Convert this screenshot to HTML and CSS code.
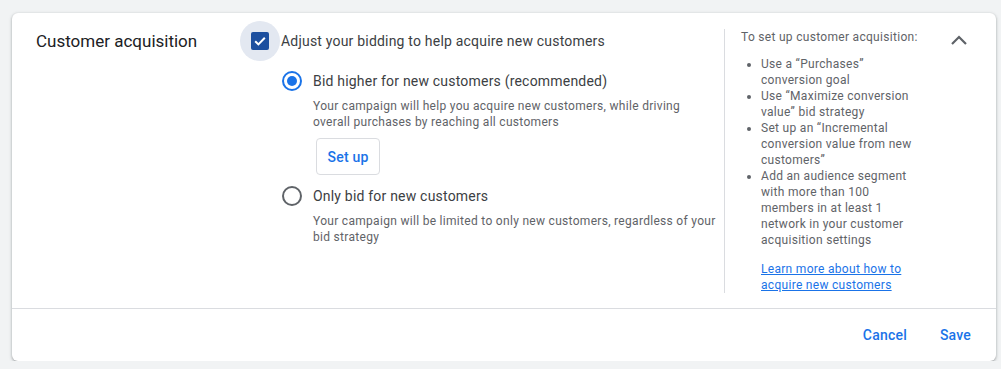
FILE: index.html
```html
<!DOCTYPE html>
<html lang="en">
<head>
<meta charset="utf-8">
<title>Customer acquisition</title>
<link rel="stylesheet" href="styles.css">
</head>
<body>
<div class="card">
  <div class="content">
    <div class="title">Customer acquisition</div>
    <div class="main">
      <label class="check-row">
        <span class="checkbox">
          <svg viewBox="0 0 18 18" width="18" height="18"><path d="M4.2 9.2l3.2 3.2 6.4-6.6" fill="none" stroke="#fff" stroke-width="2"/></svg>
        </span>
        <span class="check-label">Adjust your bidding to help acquire new customers</span>
      </label>
      <div class="options">
        <div class="option">
          <div class="radio-row">
            <span class="radio checked"></span>
            <span class="radio-label">Bid higher for new customers (recommended)</span>
          </div>
          <p class="desc">Your campaign will help you acquire new customers, while driving overall purchases by reaching all customers</p>
          <button class="setup">Set up</button>
        </div>
        <div class="option second">
          <div class="radio-row">
            <span class="radio"></span>
            <span class="radio-label">Only bid for new customers</span>
          </div>
          <p class="desc">Your campaign will be limited to only new customers, regardless of your bid strategy</p>
        </div>
      </div>
    </div>
    <aside class="aside">
      <div class="aside-head">To set up customer acquisition:</div>
      <ul class="steps">
        <li>Use a “Purchases” conversion goal</li>
        <li>Use “Maximize conversion value” bid strategy</li>
        <li>Set up an “Incremental conversion value from new customers”</li>
        <li>Add an audience segment with more than 100 members in at least 1 network in your customer acquisition settings</li>
      </ul>
      <a class="learn" href="#">Learn more about how to acquire new customers</a>
    </aside>
    <div class="collapse">
      <svg viewBox="0 0 24 24" width="24" height="24"><path d="M5 16l7-7 7 7" fill="none" stroke="#5f6368" stroke-width="2.2"/></svg>
    </div>
  </div>
  <div class="footer">
    <button class="text-btn">Cancel</button>
    <button class="text-btn">Save</button>
  </div>
</div>
</body>
</html>
```
FILE: styles.css
```css
* { box-sizing: border-box; }
body {
  margin: 0;
  background: #f1f3f4;
  font-family: Roboto, "Liberation Sans", Arial, sans-serif;
  color: #3c4043;
}
.card {
  margin: 13px 5px 0 12px;
  width: 984px;
  height: 348px;
  background: #fff;
  border-radius: 6px;
  box-shadow: 0 1px 2px rgba(60,64,67,.3), 0 1px 3px 1px rgba(60,64,67,.15);
  display: flex;
  flex-direction: column;
}
.content {
  display: grid;
  grid-template-columns: 215px 473px 197px 1fr;
  padding: 16px 0 16px 24px;
  height: 296px;
  border-bottom: 1px solid #dadce0;
}
.title {
  font-size: 17px;
  line-height: 24px;
  color: #202124;
}
.main {
  padding-right: 8px;
}
.check-row {
  display: flex;
  align-items: center;
  height: 24px;
  position: relative;
  isolation: isolate;
}
.checkbox {
  position: relative;
  width: 18px;
  height: 18px;
  border-radius: 2px;
  background: #1c4f9f;
  display: flex;
}
.checkbox::before {
  content: "";
  position: absolute;
  left: -11px;
  top: -11px;
  width: 40px;
  height: 40px;
  border-radius: 50%;
  background: #e3e8f1;
  z-index: -1;
}
.checkbox svg { display: block; }
.check-label {
  margin-left: 12px;
  font-size: 14px;
  letter-spacing: 0.2px;
  color: #3c4043;
}
.options {
  padding-left: 31px;
  margin-top: 16px;
}
.radio-row {
  display: flex;
  align-items: center;
  height: 24px;
}
.radio {
  width: 20px;
  height: 20px;
  border-radius: 50%;
  border: 2px solid #5f6368;
  display: flex;
  align-items: center;
  justify-content: center;
  flex: none;
}
.radio.checked { border-color: #1a73e8; }
.radio.checked::after {
  content: "";
  width: 10px;
  height: 10px;
  border-radius: 50%;
  background: #1a73e8;
}
.radio-label {
  margin-left: 11px;
  font-size: 14px;
  letter-spacing: 0.2px;
  color: #3c4043;
}
.desc {
  margin: 5px 0 0 31px;
  font-size: 12px;
  line-height: 16px;
  letter-spacing: 0.3px;
  color: #5f6368;
  max-width: 404px;
}
.setup {
  margin: 8px 0 0 34px;
  height: 37px;
  width: 64px;
  border: 1px solid #dadce0;
  border-radius: 4px;
  background: #fff;
  color: #1a73e8;
  font-family: inherit;
  font-size: 14px;
  font-weight: 500;
  letter-spacing: 0.2px;
  padding: 0;
}
.option.second { margin-top: 9px; }
.aside {
  border-left: 1px solid #dadce0;
  padding-left: 16px;
  font-size: 12px;
  line-height: 16px;
  letter-spacing: 0.3px;
  color: #5f6368;
}
.aside-head { white-space: nowrap; }
.steps {
  margin: 11px 0 0;
  padding-left: 20px;
  width: 176px;
}
.learn {
  display: block;
  margin: 13px 0 0 20px;
  width: 156px;
  color: #1a73e8;
  text-decoration: underline;
}
.collapse {
  padding-left: 26px;
  margin-top: -1px;
}
.collapse svg { display: block; }
.footer {
  flex: 1;
  display: flex;
  align-items: center;
  justify-content: flex-end;
  gap: 17px;
  padding-right: 17px;
}
.text-btn {
  background: none;
  border: none;
  padding: 0 8px;
  height: 36px;
  color: #1a73e8;
  font-family: inherit;
  font-size: 14px;
  font-weight: 500;
  letter-spacing: 0.2px;
}
```
